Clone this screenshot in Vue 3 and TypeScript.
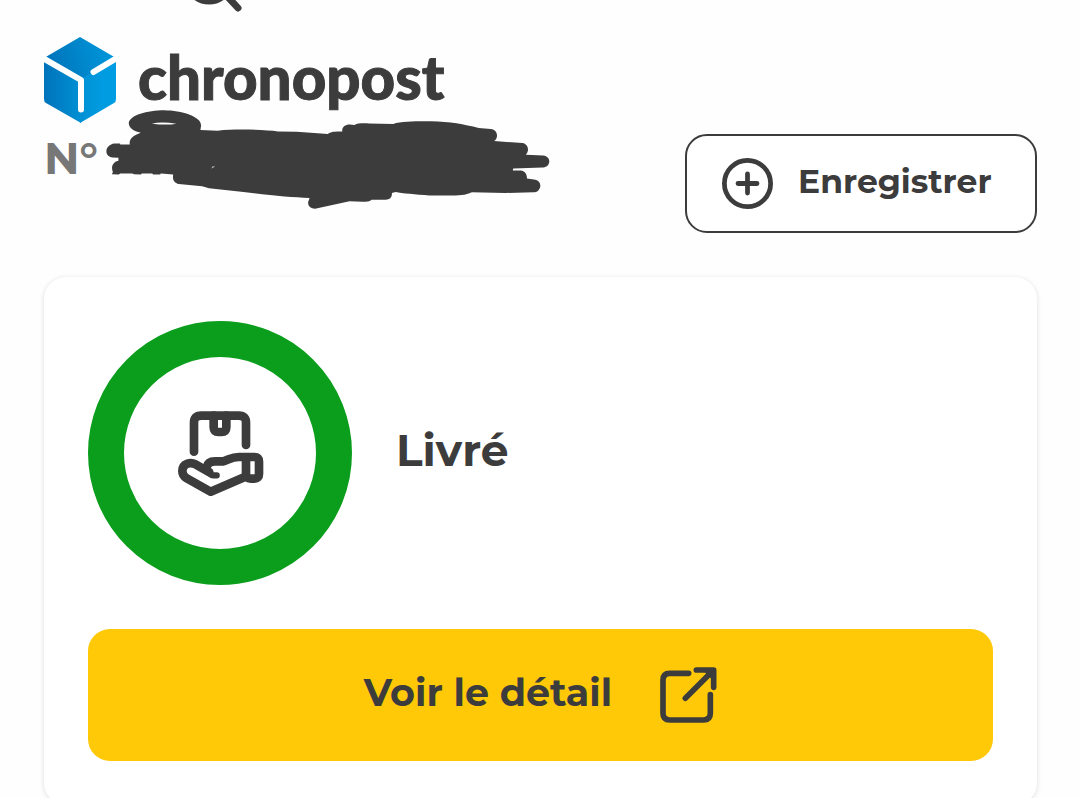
<script setup lang="ts">
const carrier: string = 'chronopost'
const status: string = 'Livré'
</script>

<template>
  <main class="page">
    <div class="search">
      <svg viewBox="0 0 60 12" width="60" height="12" aria-hidden="true">
        <circle cx="24" cy="-21" r="22" />
        <path d="M41-5L53 8" />
      </svg>
    </div>

    <header class="header">
      <div class="shipment">
        <div class="brand">
          <svg class="cube" viewBox="0 0 72 86" width="72" height="86" aria-hidden="true">
            <defs>
              <linearGradient id="cube-top" x1="0" x2="1" y1="0.6" y2="0.4">
                <stop offset="0" stop-color="#0072b9" />
                <stop offset="1" stop-color="#0098dc" />
              </linearGradient>
              <linearGradient id="cube-left" x1="0" x2="1">
                <stop offset="0" stop-color="#0073bb" />
                <stop offset="1" stop-color="#0090d4" />
              </linearGradient>
              <linearGradient id="cube-right" x1="0" x2="1">
                <stop offset="0" stop-color="#0090d4" />
                <stop offset="0.6" stop-color="#009be0" />
                <stop offset="1" stop-color="#009de2" />
              </linearGradient>
            </defs>
            <path fill="url(#cube-top)" d="M36 0L72 21 37 43 0 21z" />
            <path fill="url(#cube-left)" d="M0 21L37 43V86L2 66Q0 65 0 62z" />
            <path fill="url(#cube-right)" d="M72 21L36 43V86L70 66Q72 65 72 62z" />
            <path class="seam" d="M-4 19.500L37 43V72.500M49.500 35L76 19" />
          </svg>
          <span class="wordmark">{{ carrier }}</span>
        </div>
        <p class="number">
          N°
          <svg class="redaction" viewBox="218 29 1292 296" width="445" height="99" preserveAspectRatio="none" role="img" aria-label="Numéro masqué">
            <path
              d="M222 153C222 140 232 131 245 129L262 129V132H290C287 115 300 105 322 97C300 92 287 82 287 68C290 45 340 30 390 30C440 31 497 48 497 75L495 89L545 91C600 85 680 88 720 93L775 94L865 101C872 93 885 93 907 93C905 80 915 72 928 72L943 74C950 68 965 69 985 69L1055 71C1080 62 1130 63 1165 63C1220 64 1260 72 1303 83L1338 86C1352 88 1357 98 1356 108C1355 115 1352 119 1348 122L1430 128C1443 130 1447 142 1446 150C1444 158 1442 160 1440 163L1490 165C1503 167 1508 175 1508 183C1507 194 1500 201 1488 201L1425 203L1403 204L1402 210L1425 210C1437 211 1444 222 1443 234L1463 237C1476 238 1482 247 1482 256C1480 268 1473 275 1462 275L1380 277L1283 275C1265 284 1245 285 1215 285L1160 285C1120 280 1080 279 1062 274L1051 277C1052 290 1045 297 1033 297H992C988 302 980 303 965 303L928 302L828 324C815 324 806 315 808 303L812 292C760 290 700 285 620 274L520 263L500 257L432 250C420 247 413 238 416 222L380 219L378 222H358L355 219H325L322 222L302 221L298 219H262L258 222L238 221L241 214C236 205 237 185 257 181V172L240 171C230 170 222 163 222 153Z"
            />
            <path class="gap" d="M354 70Q380 62 425 70Q400 75 354 70ZM526 206L530 198L538 199L529 202Z" />
          </svg>
        </p>
      </div>

      <button class="save" type="button">
        <svg viewBox="157 115 150 150" width="51" height="51" aria-hidden="true">
          <circle cx="232" cy="190" r="68" />
          <path d="M204 190H260M232 162V218" />
        </svg>
        <span>Enregistrer</span>
      </button>
    </header>

    <section class="card">
      <div class="status">
        <div class="ring">
          <svg viewBox="51 60 258 258" width="86" height="86" aria-hidden="true">
            <path d="M102 185V98Q102 77 123 77H237Q258 77 258 98V165" />
            <path d="M161 77V112Q161 126 175 126H185Q199 126 199 112V77" />
            <path d="M148 247L106 223C92 215 67 220 67 243C67 252 72 260 80 265L152 305L256 260" />
            <path d="M140 232Q143 214 165 214H190C205 210 215 201 237 201H283Q297 201 297 215V252Q297 266 283 266H272Q258 266 258 252V203" />
            <path class="thumb" d="M142 230Q148 256 160 256H170" />
          </svg>
        </div>
        <h1 class="label">{{ status }}</h1>
      </div>

      <button class="details" type="button">
        <span>Voir le détail</span>
        <svg viewBox="962 79 171 171" width="57" height="57" aria-hidden="true">
          <path d="M1048 98H991Q971 98 971 118V218Q971 238 991 238H1093Q1113 238 1113 218V162" />
          <path d="M1071 88H1123V140M1038 173L1119 92" />
          <path class="tip" d="M1092 90H1121V119Z" />
        </svg>
      </button>
    </section>
  </main>
</template>

<style>
body {
  margin: 0;
  background: #fefefe;
}
</style>

<style scoped>
.page {
  box-sizing: border-box;
  padding: 0 43px 0 44px;
  color: #3c3c3c;
  font-family: Montserrat, Inter, "Open Sans", sans-serif;
  font-weight: 700;
}

svg {
  display: block;
  flex: none;
  overflow: visible;
  fill: none;
  stroke: #3c3c3c;
  stroke-linecap: round;
  stroke-linejoin: round;
}

.search {
  height: 37px;
  padding-left: 141px;
}

.search svg {
  stroke-width: 7;
}

.header {
  display: flex;
  justify-content: space-between;
  align-items: flex-end;
}

.brand {
  display: flex;
  align-items: flex-start;
  gap: 22px;
}

.cube {
  overflow: hidden;
  stroke: none;
}

.cube .seam {
  stroke: #fff;
  stroke-width: 6;
}

.wordmark {
  font-family: Lato, sans-serif;
  font-size: 60px;
  font-weight: 900;
  line-height: 80px;
  -webkit-text-stroke: 1px #3c3c3c;
}

.number {
  position: relative;
  margin: 0;
  color: #777;
  font-size: 44px;
  line-height: 70px;
  padding-bottom: 40px;
}

.redaction {
  position: absolute;
  left: 61px;
  top: -13px;
  fill: #3c3c3c;
  stroke: none;
}

.gap {
  fill: #fff;
}

button {
  display: flex;
  align-items: center;
  border-radius: 22px;
  color: inherit;
  font: inherit;
  cursor: pointer;
}

button span,
.label {
  padding-bottom: 6px;
}

.save {
  box-sizing: border-box;
  min-width: 352px;
  height: 99px;
  padding: 0 35px;
  gap: 25px;
  border: 2px solid #3c3c3c;
  background: #fff;
  font-size: 33px;
}

.save svg {
  stroke-width: 14;
}

.card {
  margin-top: 44px;
  padding: 44px;
  border-radius: 22px;
  background: #fff;
  box-shadow: 0 1px 5px rgba(20, 20, 50, 0.14);
}

.status {
  display: flex;
  align-items: center;
  gap: 44px;
}

.ring {
  box-sizing: border-box;
  display: flex;
  flex: none;
  align-items: center;
  justify-content: center;
  width: 264px;
  height: 264px;
  border: 36px solid #0a9e1c;
  border-radius: 50%;
}

.ring svg {
  stroke-width: 26;
}

.ring .thumb {
  stroke-width: 19;
}

.label {
  margin: 0;
  font-size: 44px;
  line-height: 54px;
}

.details {
  justify-content: center;
  width: 100%;
  height: 132px;
  margin-top: 44px;
  gap: 48px;
  border: 0;
  background: #ffc908;
  font-size: 38px;
}

.details svg {
  stroke-width: 17;
}

.details .tip {
  fill: #3c3c3c;
  stroke: none;
}
</style>
